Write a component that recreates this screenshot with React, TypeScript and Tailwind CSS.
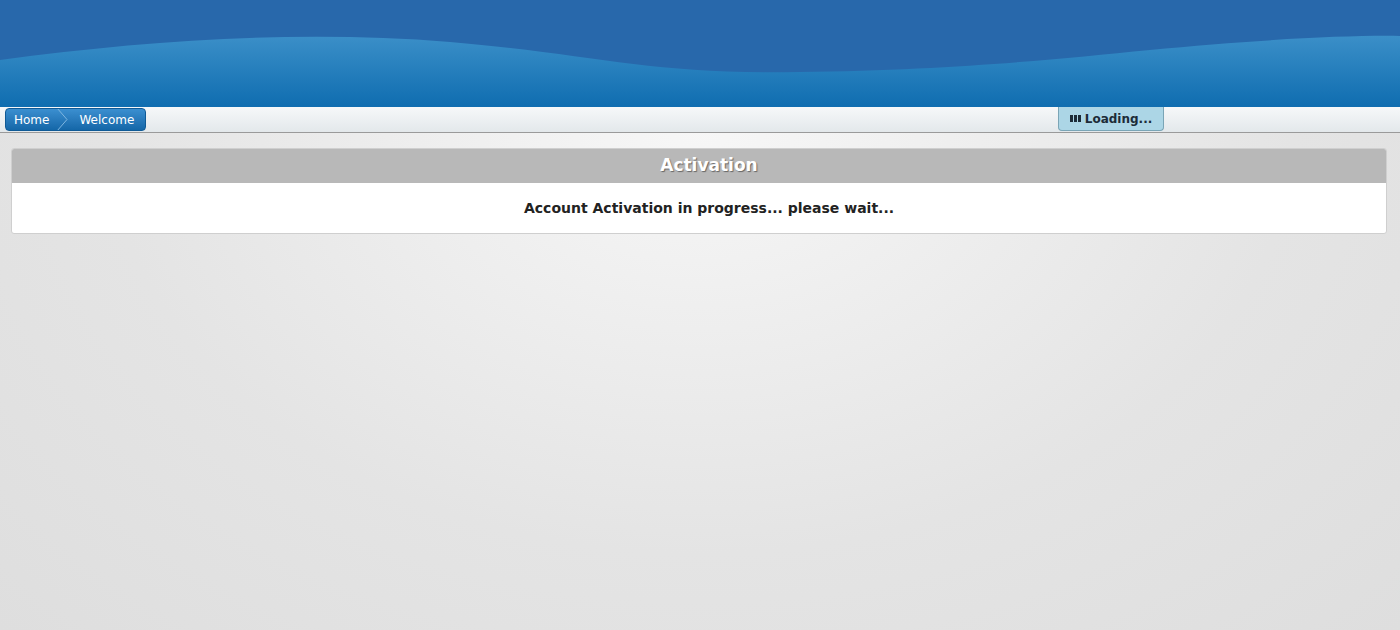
import React from 'react';

export default function App() {
  return (
    <div className="w-full min-h-[630px] bg-[radial-gradient(ellipse_at_50%_20%,#f7f7f7_0%,#e4e4e4_60%,#dedede_100%)]" style={{ fontFamily: '"DejaVu Sans", Verdana, sans-serif' }}>
      {/* banner */}
      <div className="h-[107px] w-full bg-[#2a6cae]">
        <svg width="100%" height="107" viewBox="0 0 1400 107" preserveAspectRatio="none">
          <defs>
            <linearGradient id="w" x1="0" y1="0" x2="0" y2="1">
              <stop offset="0" stopColor="#3b8fc8" />
              <stop offset="1" stopColor="#0f6db0" />
            </linearGradient>
          </defs>
          <rect width="1400" height="107" fill="#2868ab" />
          <path d="M0 60 C150 40 300 30 450 42 C600 55 650 75 800 72 C950 70 1050 60 1150 50 C1250 40 1350 35 1400 36 L1400 107 L0 107 Z" fill="url(#w)" />
        </svg>
      </div>
      {/* breadcrumb bar */}
      <div className="h-[26px] border-b border-[#9a9a9a] bg-gradient-to-b from-[#f6f8f9] to-[#e3e8eb] relative flex items-center px-[5px]">
        <div className="flex items-center h-[23px] rounded-[4px] border border-[#0f5a96] bg-gradient-to-b from-[#3b8fd0] to-[#1467a8] text-white text-[12px] overflow-hidden">
          <span className="pl-2 pr-3">Home</span>
          <svg width="12" height="23" viewBox="0 0 12 23" className="-ml-1"><path d="M0 0 L10 11.5 L0 23" fill="none" stroke="#7fb6e0" strokeWidth="1" /></svg>
          <span className="pl-[10px] pr-[11px]">Welcome</span>
        </div>
        <div className="absolute left-[1058px] top-0 h-[24px] w-[106px] rounded-b-[4px] border border-t-0 border-[#7aa5b6] bg-[#acd6e6] flex items-center justify-center gap-[4px] text-[12px] font-bold text-[#1c2c38]">
          <span className="flex gap-[1px]"><i className="block w-[3px] h-[7px] bg-[#1c2c38]" /><i className="block w-[3px] h-[7px] bg-[#1c2c38]" /><i className="block w-[3px] h-[7px] bg-[#1c2c38]" /></span>
          Loading...
        </div>
      </div>
      {/* panel */}
      <div className="pl-[11px] pr-[13px] pt-[15px]">
        <div className="rounded-[3px] border border-[#cfcfcf] bg-white overflow-hidden">
          <div className="h-[34px] bg-[#b8b8b8] flex items-center justify-center pl-[20px] text-white font-bold text-[17px] [text-shadow:1px_1px_1px_#666]">Activation</div>
          <div className="h-[50px] flex items-center justify-center pl-[20px] font-bold text-[14px] text-[#222]">Account Activation in progress... please wait...</div>
        </div>
      </div>
    </div>
  );
}
